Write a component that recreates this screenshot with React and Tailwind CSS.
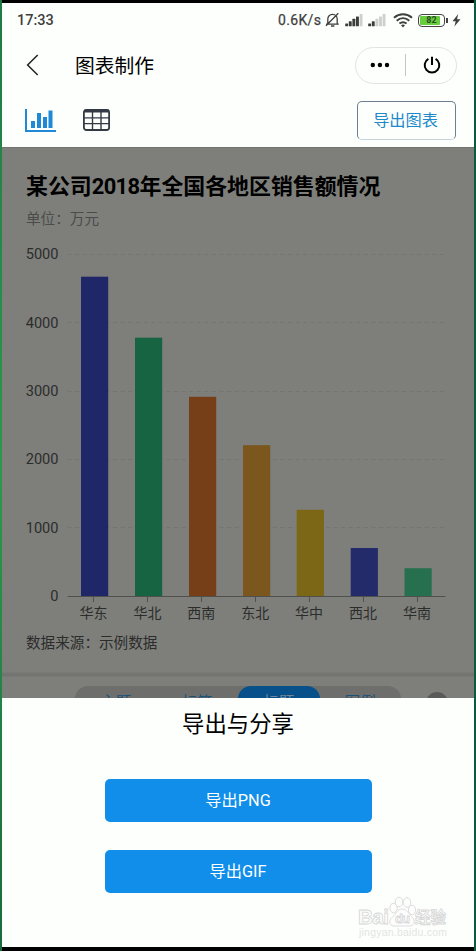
const bars = [
  { name: '华东', x: 81, top: 276.7, color: '#1f2769' },
  { name: '华北', x: 135, top: 337.7, color: '#166441' },
  { name: '西南', x: 189, top: 396.8, color: '#763f18' },
  { name: '东北', x: 243, top: 445.2, color: '#7b561d' },
  { name: '华中', x: 296.7, top: 509.8, color: '#7c6716' },
  { name: '西北', x: 350.7, top: 548, color: '#232b6b' },
  { name: '华南', x: 404.5, top: 568.2, color: '#27704f' },
]

const ticks = [
  { value: 5000, y: 254.5 },
  { value: 4000, y: 322.8 },
  { value: 3000, y: 391.2 },
  { value: 2000, y: 459.5 },
  { value: 1000, y: 527.8 },
  { value: 0, y: 596 },
]

const tabs = [
  { label: '主题', active: false },
  { label: '标签', active: false },
  { label: '标题', active: true },
  { label: '图例', active: false },
]

function Signal({ level }) {
  return (
    <svg width="18" height="14" viewBox="0 0 18 14">
      {[0, 1, 2, 3, 4].map((i) => (
        <rect
          key={i}
          x={0.2 + i * 3.6}
          y={10.6 - i * 2.4}
          width="2.9"
          height={2.6 + i * 2.4}
          rx="0.5"
          fill={i < level ? '#3c3c3c' : '#cfcfcf'}
        />
      ))}
    </svg>
  )
}

function StatusBar() {
  return (
    <div className="h-[34px] flex items-center pl-[15px] text-[#3f3f3f]">
      <span className="w-[261px] pt-[2px] text-[14.5px] font-medium leading-none">17:33</span>
      <span className="w-[47px] text-[14px] leading-none tracking-[0.35px] whitespace-nowrap [-webkit-text-stroke:0.25px_#3f3f3f]">0.6K/s</span>
      <svg width="15" height="16" viewBox="0 0 15 16" fill="none" stroke="#3f3f3f" strokeWidth="1.3">
        <path d="M2.8 12V7.2C2.8 4.3 4.7 2.4 7.5 2.4s4.7 1.9 4.7 4.8V12M1 12.2h12.8M6 14h3.4M13.3 1.2L1 13.8" />
      </svg>
      <div className="flex items-center ml-[5px] gap-[5px]">
        <Signal level={4} />
        <Signal level={2} />
      </div>
      <svg className="ml-[7px]" width="20" height="15" viewBox="0 0 20 15" fill="none" stroke="#3f3f3f" strokeWidth="2">
        <path d="M1 4.800c5.300-4.600 12.700-4.600 18 0M3.700 7.700c3.800-3.200 8.800-3.200 12.600 0M6.400 10.500c2.300-1.700 4.900-1.700 7.200 0" />
        <path d="M8 12.200c1.200-.8 2.800-.8 4 0L10 14.400z" fill="#3f3f3f" stroke="none" />
      </svg>
      <div className="ml-[5px] w-[27px] h-[13px] rounded-[4px] border-[1.500px] border-[#444] bg-white p-[1px]">
        <div className="w-[20px] h-full rounded-[1px] bg-[#67cf3c] flex items-center justify-center text-[9px] font-bold leading-none text-[#2f4a26] pl-[3px]">82</div>
      </div>
      <div className="w-[1.500px] h-[5px] ml-px bg-[#444]" />
      <svg className="ml-[4px]" width="9" height="13" viewBox="0 0 9 13" fill="#3f3f3f">
        <path d="M6.200 0L0.500 7.300h3.200L2.400 12.600 8.500 5.300H5z" />
      </svg>
    </div>
  )
}

function TitleBar() {
  return (
    <div className="h-[56px] flex items-center pl-[24px] pr-[17px]">
      <svg width="13" height="22" viewBox="0 0 13 22" fill="none" stroke="#222" strokeWidth="1.500">
        <path d="M11.700 1L1.600 11l10.100 10" />
      </svg>
      <h1 className="ml-[36px] pt-[3px] text-[19.800px] leading-none text-black">图表制作</h1>
      <div className="ml-auto w-[102px] h-[37px] rounded-full border border-[#e3e3e3] flex items-center">
        <svg className="ml-[14px]" width="20" height="6" viewBox="0 0 20 6" fill="#000">
          <circle cx="2.800" cy="3" r="2.200" />
          <circle cx="9.900" cy="3" r="2.200" />
          <circle cx="17" cy="3" r="2.200" />
        </svg>
        <div className="ml-[15px] w-px h-[22px] bg-[#c4c4c4]" />
        <svg className="ml-[17px]" width="18" height="18" viewBox="0 0 18 18" fill="none" stroke="#000" strokeWidth="2">
          <path d="M5.400 2.900a7.300 7.300 0 1 0 7.200 0M9 0.700v8.300" />
        </svg>
      </div>
    </div>
  )
}

function Toolbar() {
  return (
    <div className="h-[54px] flex items-center pl-[23px] pr-[18px]">
      <svg width="31" height="24" viewBox="0 0 31 24" fill="#2089d6">
        <path d="M0 1h2v21h29v2H0z" />
        <path d="M6 13h4v7H6zM12 5h4v15h-4zM18 9h4v11h-4zM23.500 2.500h4v17.500h-4z" />
      </svg>
      <svg className="ml-[27px]" width="27" height="22" viewBox="0 0 27 22" fill="none" stroke="#333a45" strokeWidth="1.400">
        <rect x="0.900" y="1" width="25.200" height="20" rx="2.500" strokeWidth="1.800" />
        <path d="M1.500 2h24" strokeWidth="3" />
        <path d="M1 8.900h25M1 14.600h25M9.500 3v18M18 3v18" />
      </svg>
      <button className="ml-auto w-[99px] h-[39px] rounded-[5px] border border-[#6d7f90] border-b-[#c3d4df] pt-[2px] pr-[2px] text-[16.200px] leading-none text-[#2089c9]">
        导出图表
      </button>
    </div>
  )
}

function BarChart() {
  return (
    <svg className="block" width="472" height="390" viewBox="2 238 472 390">
      {ticks.map((t) => (
        <text key={t.value} x="58.500" y={t.y + 4.700} fontSize="14.600" textAnchor="end" fill="#2c2d2b">
          {t.value}
        </text>
      ))}
      {ticks.slice(0, 5).map((t) => (
        <path key={t.value} d={`M67.500 ${Math.floor(t.y) + 0.5}H445`} stroke="#747572" strokeDasharray="4 3.600" />
      ))}
      {bars.map((b) => (
        <rect key={b.name} x={b.x} y={b.top} width="27.200" height={596 - b.top} fill={b.color} />
      ))}
      <path d="M67.500 596.500H445.500" stroke="#50514f" />
      {bars.map((b, i) => (
        <g key={b.name}>
          <path d={`M${93.500 + i * 54} 597v5`} stroke="#50514f" />
          <text x={93.500 + i * 53.900} y="617.800" fontSize="14" textAnchor="middle" fill="#2c2d2b">
            {b.name}
          </text>
        </g>
      ))}
    </svg>
  )
}

function ChartArea() {
  return (
    <div className="h-[551px] bg-[#7e7f7b] overflow-hidden border-t border-[#737470]">
      <div className="h-[528px]">
        <h2 className="h-[90px] pl-[24px] pt-[28px] text-black">
          <span className="block text-[21.900px] font-bold leading-[22px]">
            某公司<span className="tracking-[-0.600px]">2018</span>年全国各地区销售额情况
          </span>
          <span className="block mt-[14px] text-[14.600px] leading-[15px] font-normal text-[#4b4c4a]">单位：万元</span>
        </h2>
        <BarChart />
        <p className="pl-[24px] mt-[7px] text-[14.600px] leading-[16px] text-[#2c2d2b]">数据来源：示例数据</p>
      </div>
      <div className="-mt-[4px] h-[5px] bg-linear-to-b from-[#7b7c78] via-[#71726f] to-[#7b7c78]" />
      <div className="flex mt-[9px] pl-[73px]">
        <div className="flex w-[326px] h-[34px] rounded-[13px] bg-[#6e6f6d]">
          {tabs.map((tab) => (
            <div
              key={tab.label}
              className={
                tab.active
                  ? 'flex-1 rounded-[13px] bg-[#08508a] text-[#6f8796] text-center text-[15.500px] leading-[35px]'
                  : 'flex-1 text-[#1b5278] text-center text-[15.500px] leading-[35px]'
              }
            >
              {tab.label}
            </div>
          ))}
        </div>
        <div className="ml-[25px] mt-[6px] w-[22px] h-[22px] rounded-full bg-[#5a5b59]" />
      </div>
    </div>
  )
}

function Watermark() {
  return (
    <svg className="absolute right-[24px] bottom-[6px]" width="94" height="46" viewBox="0 0 94 46">
      <g fill="#fdfdfd" stroke="#dcdcdc" strokeWidth="1">
        <ellipse cx="37.500" cy="13" rx="3.700" ry="4.700" />
        <ellipse cx="43" cy="7" rx="3.800" ry="4.800" />
        <ellipse cx="51" cy="7.500" rx="3.800" ry="4.800" />
        <ellipse cx="56" cy="15" rx="3.600" ry="4.700" />
        <path d="M46 14c-4.500 0-6 5-9 7.500-6 5-3 10 2 9.500h14c5 .5 7.500-5 2.500-9.500C52.500 18.500 51 14 46 14z" />
      </g>
      <g fill="#fdfdfd" stroke="#d6d6d6" strokeWidth="0.800" fontFamily="'Liberation Sans', 'Noto Sans CJK SC', sans-serif" fontWeight="bold">
        <text x="2" y="29" fontSize="21" textLength="31">Bai</text>
        <text x="39" y="28" fontSize="13" textLength="15">du</text>
        <text x="59" y="28" fontSize="15.500">经验</text>
      </g>
      <text x="3" y="41" fontSize="10.500" fill="#e4e4e4" textLength="88" fontFamily="'Liberation Sans', sans-serif">
        jingyan.baidu.com
      </text>
    </svg>
  )
}

function ExportSheet() {
  return (
    <div className="relative h-[249px] bg-[#fdfffc] flex flex-col items-center pt-[14px]">
      <h3 className="text-[22.400px] leading-[24px] text-black">导出与分享</h3>
      <button className="mt-[43px] w-[267px] h-[43px] rounded-[5px] bg-[#108ee9] text-[16.300px] leading-none text-white pt-px">
        导出PNG
      </button>
      <button className="mt-[28px] w-[267px] h-[43px] rounded-[5px] bg-[#108ee9] text-[16.300px] leading-none text-white pt-px">
        导出GIF
      </button>
      <Watermark />
    </div>
  )
}

export default function App() {
  return (
    <div className="w-[476px] h-[951px] flex bg-black overflow-hidden font-[Roboto,'Noto_Sans_CJK_SC',sans-serif]">
      <div className="w-[2px] bg-linear-to-b from-[#1f7a45] via-[#2a9a4a] to-[#1a6b3c]" />
      <div className="w-[472px] pt-[3px] pb-[4px]">
        <div className="h-[144px] bg-[#fdfffc]">
          <StatusBar />
          <TitleBar />
          <Toolbar />
        </div>
        <ChartArea />
        <ExportSheet />
      </div>
      <div className="w-[2px] bg-[#0f573f]" />
    </div>
  )
}
